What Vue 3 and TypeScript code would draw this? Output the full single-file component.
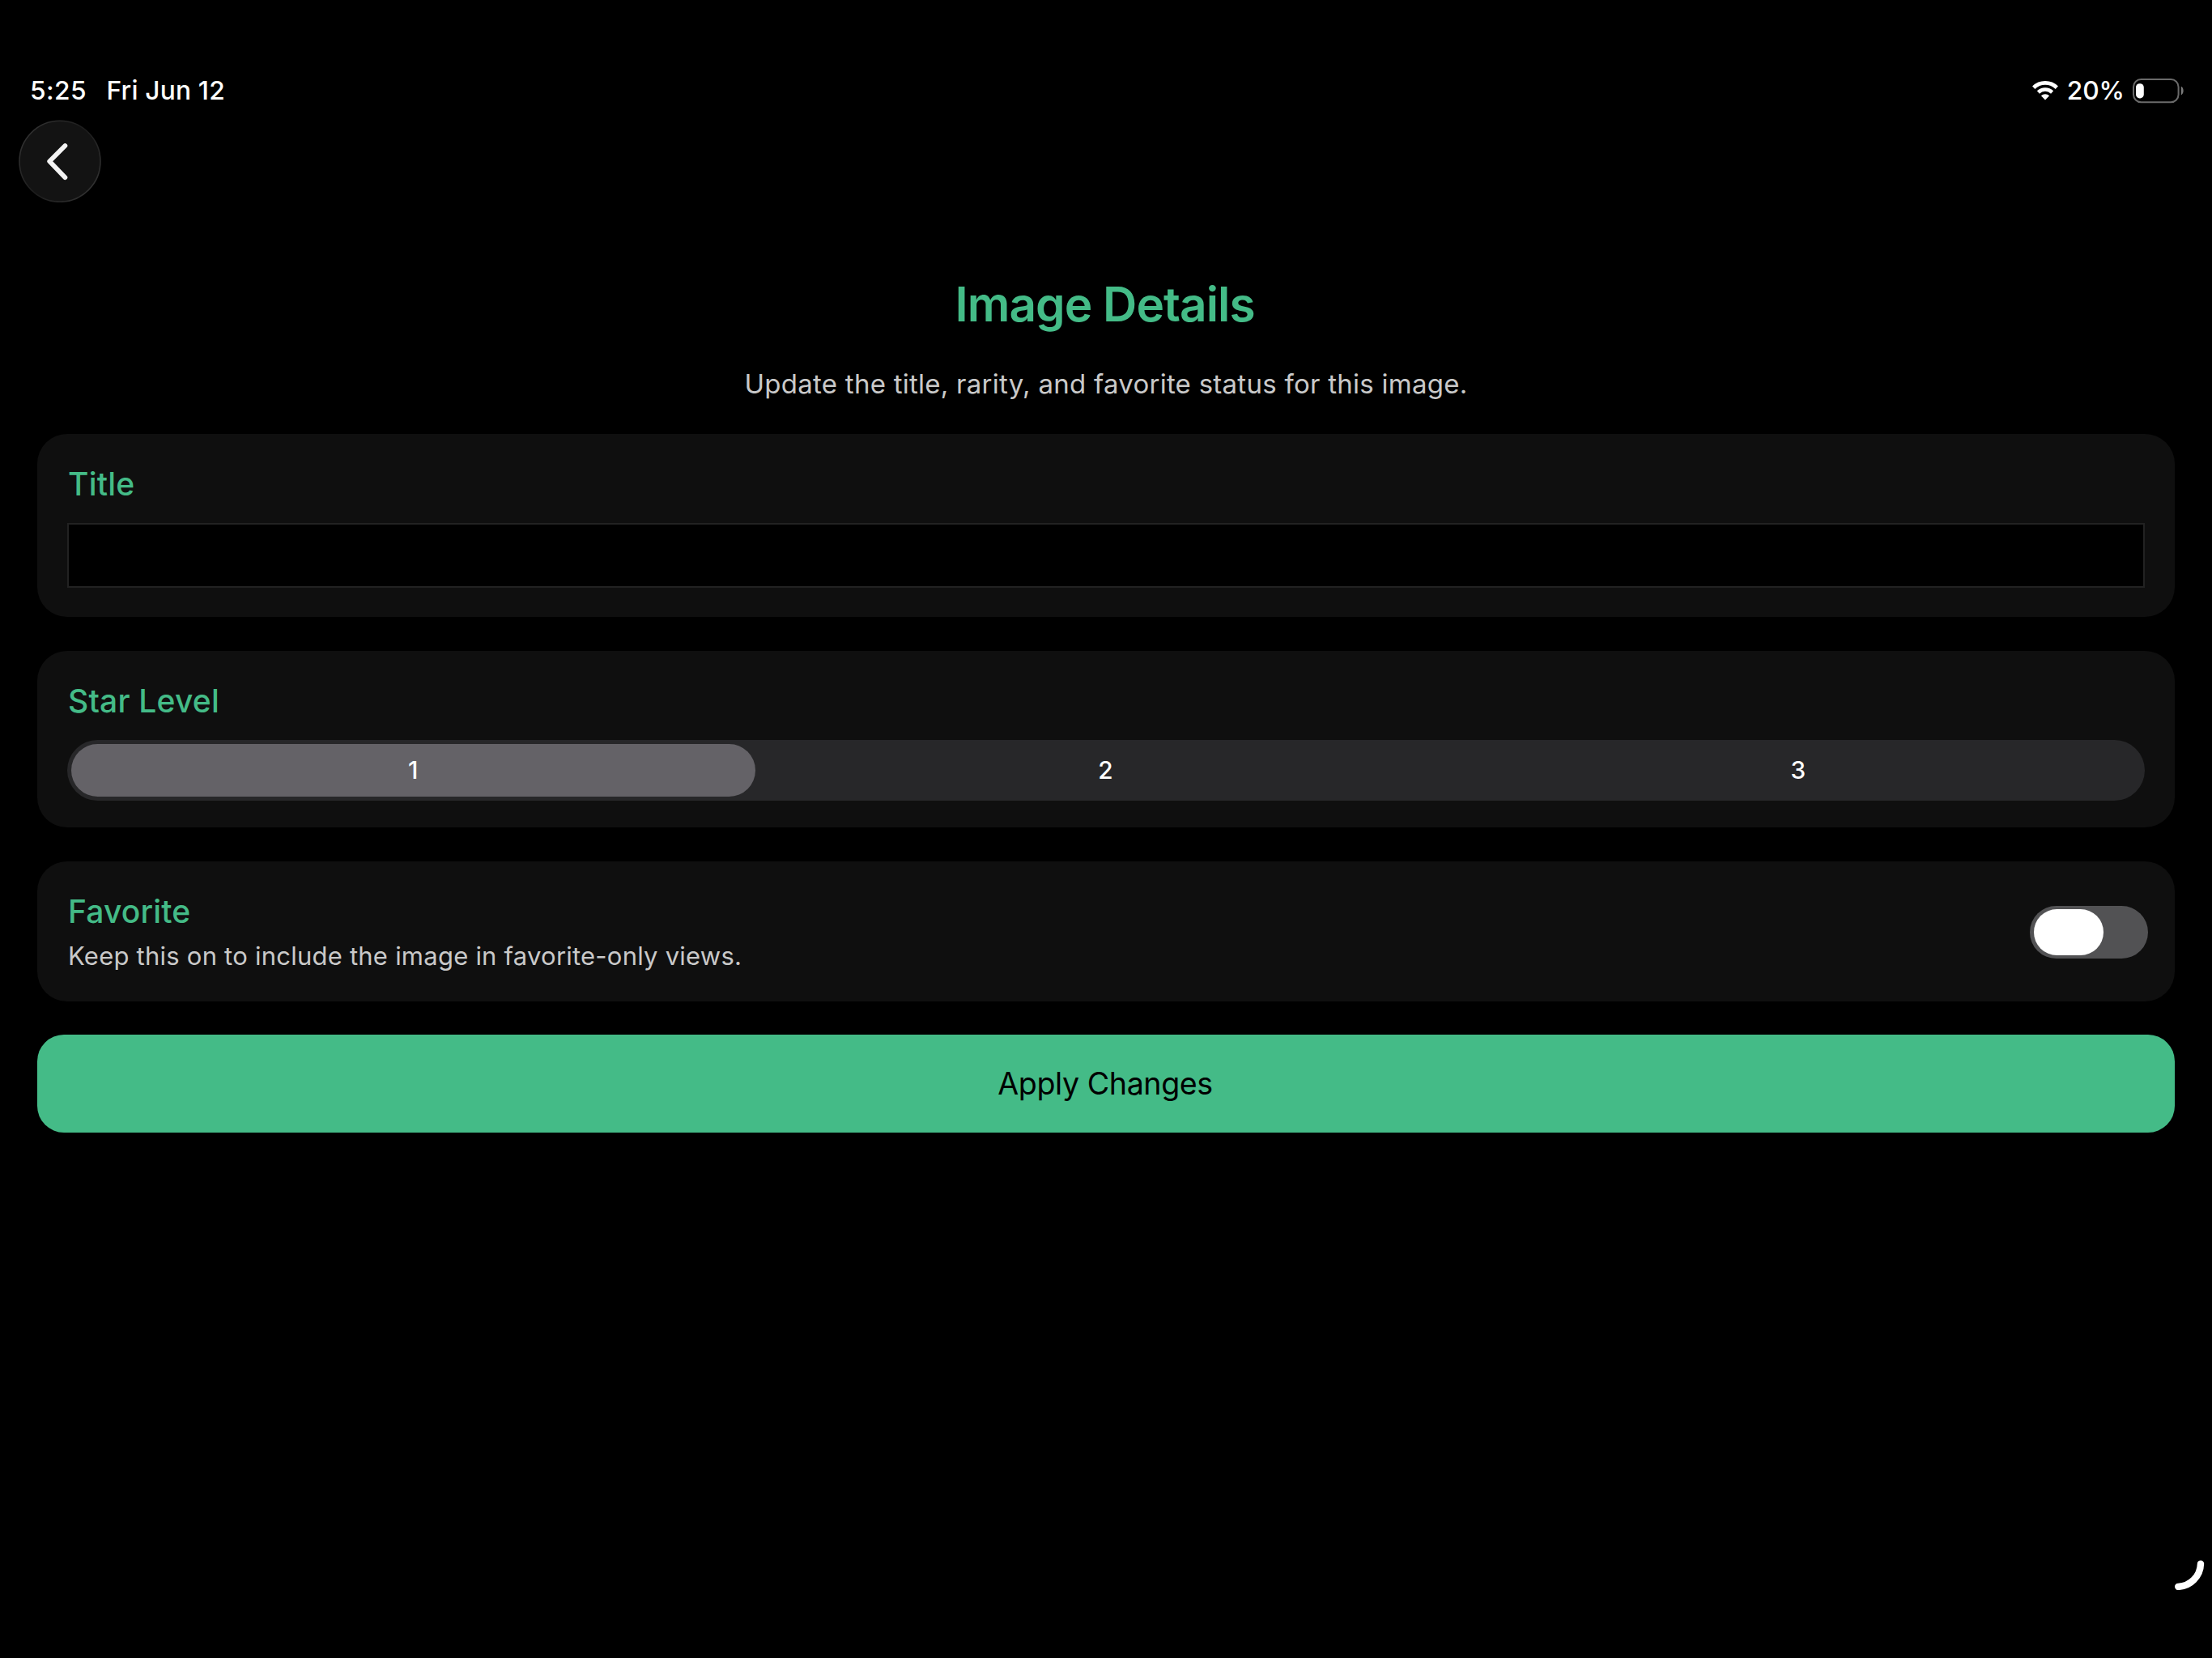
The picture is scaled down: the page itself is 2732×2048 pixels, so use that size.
<script setup lang="ts">
import { ref } from 'vue'

const levels: number[] = [1, 2, 3]
const level = ref<number>(1)
const favorite = ref<boolean>(false)
const title = ref<string>('')
</script>

<template>
  <div class="screen">
    <header class="status">
      <span class="time">5:25</span>
      <span class="date">Fri Jun 12</span>
      <svg class="wifi" width="36" height="28" viewBox="0 0 36 28" aria-hidden="true">
        <path d="M3.7 11.2 A20.6 20.6 0 0 1 32.3 11.2" fill="none" stroke="#fff" stroke-width="4.7" />
        <path d="M9.4 17 A12.6 12.6 0 0 1 26.6 17" fill="none" stroke="#fff" stroke-width="4.5" />
        <path d="M18 26.4 L12.9 21.3 A7.3 7.3 0 0 1 23.1 21.3 Z" fill="#fff" />
      </svg>
      <span class="percent">20%</span>
      <svg class="battery" width="66" height="32" viewBox="0 0 66 32" aria-hidden="true">
        <rect x="2" y="2" width="55.6" height="28.2" rx="9.4" fill="none" stroke="#6a6a6a" stroke-width="2" />
        <rect x="5" y="7.2" width="9.8" height="18.2" rx="4.6" fill="#fff" />
        <path d="M60.8 10.8 C64.6 12.4 64.6 19.8 60.8 21.4 Z" fill="#7a7a7a" />
      </svg>
    </header>

    <button class="back" type="button" aria-label="Back">
      <svg width="102" height="102" viewBox="0 0 102 102">
        <defs>
          <linearGradient id="rim" x1="0" y1="0.1" x2="1" y2="0.9">
            <stop offset="0" stop-color="#363636" />
            <stop offset="0.5" stop-color="#1c1c1c" />
            <stop offset="1" stop-color="#363636" />
          </linearGradient>
        </defs>
        <circle cx="51" cy="51.3" r="50" fill="#131313" stroke="url(#rim)" stroke-width="1.6" />
        <path d="M57.4 32 L38.2 51.3 L57.4 71.2" fill="none" stroke="#f3f3f3" stroke-width="5.8" stroke-linecap="round" stroke-linejoin="round" />
      </svg>
    </button>

    <main class="content">
      <h1 class="heading">Image Details</h1>
      <p class="intro">Update the title, rarity, and favorite status for this image.</p>

      <section class="card card-title">
        <label class="label label-title" for="title">Title</label>
        <input id="title" v-model="title" class="field" type="text" />
      </section>

      <section class="card card-level">
        <h2 class="label label-level">Star Level</h2>
        <div class="segments">
          <button
            v-for="n in levels"
            :key="n"
            type="button"
            class="segment"
            :class="{ selected: n === level }"
            @click="level = n"
          >
            {{ n }}
          </button>
        </div>
      </section>

      <section class="card card-favorite">
        <div class="favorite-text">
          <h2 class="label label-favorite">Favorite</h2>
          <p class="hint">Keep this on to include the image in favorite-only views.</p>
        </div>
        <button
          type="button"
          class="toggle"
          :class="{ on: favorite }"
          aria-label="Favorite"
          @click="favorite = !favorite"
        >
          <span class="knob"></span>
        </button>
      </section>

      <button class="apply" type="button">Apply Changes</button>
    </main>

    <svg class="spinner" width="40" height="40" viewBox="0 0 40 40" aria-hidden="true">
      <path d="M34 7.6 A29 29 0 0 1 6.2 35.9" fill="none" stroke="#fff" stroke-width="8.4" stroke-linecap="round" />
    </svg>
  </div>
</template>

<style>
html,
body {
  margin: 0;
  background: #000;
}
</style>

<style scoped>
.screen {
  position: relative;
  box-sizing: border-box;
  width: 2732px;
  height: 2048px;
  padding-top: 92px;
  overflow: hidden;
  background: #000;
  font-family: Inter, 'Liberation Sans', sans-serif;
}

button {
  margin: 0;
  padding: 0;
  border: 0;
  background: none;
  font-family: inherit;
}

h1,
h2,
p {
  margin: 0;
}

.status {
  display: flex;
  align-items: center;
  box-sizing: border-box;
  height: 40px;
  padding: 0 33px 0 37px;
  color: #fff;
  font-size: 31.7px;
  font-weight: 500;
  line-height: 40px;
  white-space: nowrap;
}

.time {
  width: 94.5px;
  letter-spacing: 0.4px;
}

.date {
  letter-spacing: 0.2px;
}

.wifi {
  margin-top: -2px;
  margin-left: auto;
}

.percent {
  margin-left: 9px;
  letter-spacing: -0.1px;
}

.battery {
  margin-left: 9px;
  margin-top: -1px;
}

.back {
  display: block;
  width: 102px;
  height: 102px;
  margin: 16px 0 0 23px;
}

.back svg {
  display: block;
}

.content {
  display: flex;
  flex-direction: column;
  padding: 86px 46px 0;
}

.heading {
  padding-right: 3px;
  color: #44bb87;
  font-size: 58.5px;
  font-weight: 600;
  line-height: 80px;
  letter-spacing: -0.95px;
  text-align: center;
}

.intro {
  margin-top: 37px;
  color: #c9c9c9;
  font-size: 33px;
  line-height: 42px;
  letter-spacing: 0.26px;
  text-align: center;
}

.card {
  box-sizing: border-box;
  padding: 38px 37px 0;
  border-radius: 37px;
  background: #0f0f0f;
}

.label {
  display: block;
  padding-left: 1px;
  color: #44bb87;
  font-size: 39px;
  font-weight: 500;
  line-height: 48px;
}

.label-title {
  letter-spacing: 0.2px;
}

.label-level {
  letter-spacing: 0.2px;
}

.label-favorite {
  letter-spacing: 0.15px;
}

.card-title {
  height: 226px;
  margin-top: 41px;
}

.field {
  display: block;
  box-sizing: border-box;
  width: 100%;
  height: 80px;
  margin: 24px 0 0;
  padding: 0 16px;
  border: 2px solid #222;
  border-radius: 0;
  outline: none;
  background: #000;
  color: #fff;
  font: 400 33px Inter, sans-serif;
}

.card-level {
  height: 218px;
  margin-top: 42px;
}

.segments {
  display: flex;
  height: 75px;
  margin-top: 24px;
  border-radius: 37.5px;
  background: #272729;
}

.segment {
  flex: 1;
  box-sizing: border-box;
  margin: 5px;
  padding-right: 1px;
  border-radius: 33px;
  color: #fff;
  font-size: 29.8px;
  font-weight: 500;
  line-height: 65px;
}

.segment.selected {
  background: #646267;
}

.card-favorite {
  display: flex;
  align-items: center;
  justify-content: space-between;
  height: 173px;
  margin-top: 42px;
  padding: 0 33px 0 37px;
}

.hint {
  margin-top: 12px;
  padding-left: 1px;
  color: #c9c9c9;
  font-size: 31px;
  line-height: 38px;
  letter-spacing: 0.23px;
}

.toggle {
  display: flex;
  align-items: center;
  box-sizing: border-box;
  width: 146px;
  height: 65px;
  margin-top: 2px;
  padding: 0 5px;
  border-radius: 33px;
  background: #525254;
}

.toggle.on {
  justify-content: flex-end;
  background: #44bb87;
}

.knob {
  width: 86px;
  height: 57px;
  border-radius: 28.5px;
  background: #fff;
}

.apply {
  height: 121px;
  margin-top: 41px;
  padding: 0 2px 1px 0;
  border-radius: 33px;
  background: #44bb87;
  color: #000;
  font-size: 37.6px;
  font-weight: 400;
  letter-spacing: -0.4px;
}

.spinner {
  position: absolute;
  top: 1924px;
  left: 2684px;
}
</style>
